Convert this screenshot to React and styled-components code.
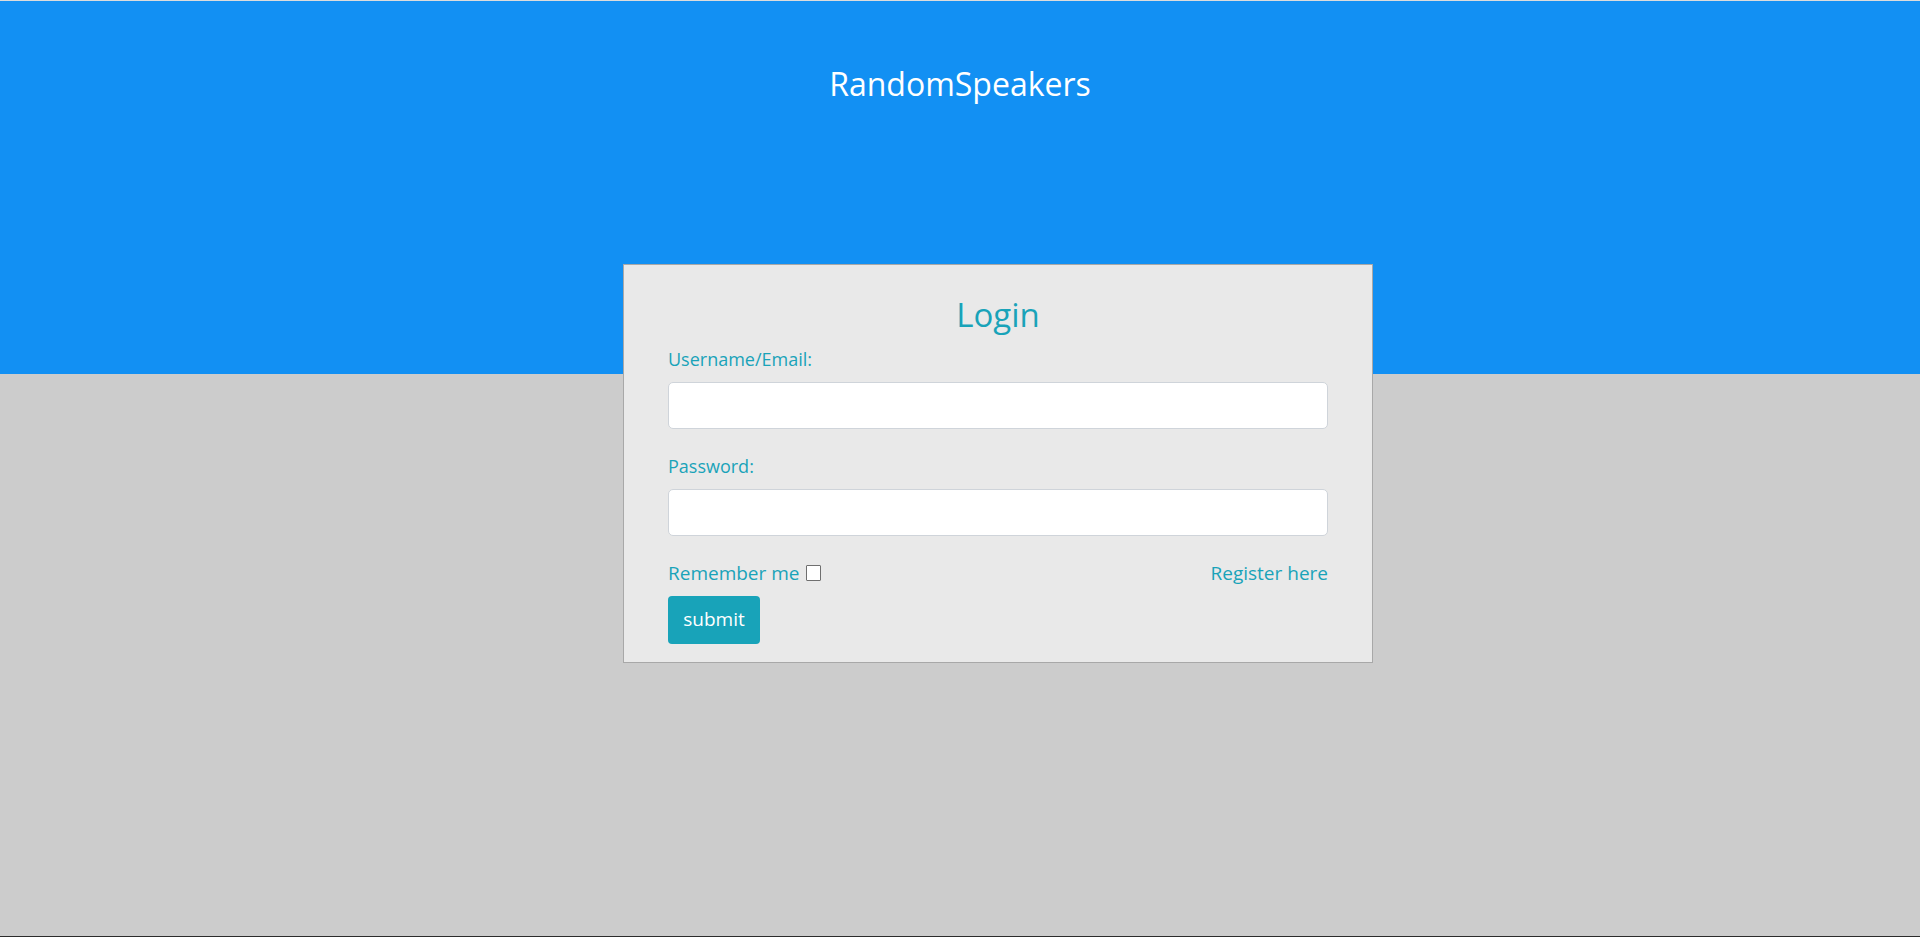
import React from "react";
import styled, { createGlobalStyle } from "styled-components";

const GlobalStyle = createGlobalStyle`
  html, body {
    margin: 0;
    padding: 0;
  }
  body {
    font-family: "Open Sans", "Noto Sans", "Liberation Sans", sans-serif;
    background: #cccccc;
  }
  * { box-sizing: border-box; }
`;

const Page = styled.div`
  min-height: 937px;
  display: flex;
  flex-direction: column;
  background: #cccccc;
  border-top: 1px solid #dcdcdc;
  border-bottom: 1px solid #2b2b2b;
`;

const Header = styled.header`
  height: 373px;
  flex: none;
  background: #1290f3;
  padding-top: 61px;
  text-align: center;
`;

const Brand = styled.div`
  color: #ffffff;
  font-size: 32px;
  line-height: normal;
`;

const Main = styled.main`
  flex: 1;
  display: flex;
  justify-content: flex-start;
  padding-left: 623px;
`;

const Card = styled.form`
  width: 750px;
  margin-top: -110px;
  align-self: flex-start;
  background: #e9e9e9;
  border: 1px solid #a8a8a8;
  padding: 0 44px 18px 44px;
  display: flex;
  flex-direction: column;
`;

const Title = styled.h2`
  margin: 27px 0 0;
  font-weight: 400;
  font-size: 33px;
  line-height: normal;
  color: #19a3b9;
  text-align: center;
`;

const Field = styled.div`
  display: flex;
  flex-direction: column;
  margin-top: ${(p) => p.$gap}px;
`;

const Label = styled.label`
  font-size: 18px;
  line-height: normal;
  color: #19a3b9;
  margin-bottom: 11px;
`;

const Input = styled.input`
  height: 47px;
  width: 100%;
  background: #ffffff;
  border: 1px solid #cfd4da;
  border-radius: 5px;
  padding: 6px 12px;
  font-size: 18px;
  font-family: inherit;
  outline: none;
`;

const OptionsRow = styled.div`
  display: flex;
  justify-content: space-between;
  align-items: baseline;
  margin-top: 24px;
  font-size: 19px;
  line-height: normal;
  color: #19a3b9;
`;

const Remember = styled.label`
  display: inline-flex;
  align-items: baseline;
`;

const Check = styled.input`
  appearance: none;
  -webkit-appearance: none;
  width: 15px;
  height: 16px;
  margin: 0 0 0 6px;
  border: 1px solid #6f6f6f;
  background: #ffffff;
  border-radius: 1px;
  align-self: flex-end;
  position: relative;
  top: -5px;
`;

const RegisterLink = styled.a`
  color: #19a3b9;
  text-decoration: none;
`;

const SubmitButton = styled.button`
  align-self: flex-start;
  margin-top: 10px;
  width: 92px;
  height: 48px;
  background: #18a3b9;
  color: #ffffff;
  border: none;
  border-radius: 4px;
  font-family: inherit;
  font-size: 19px;
  padding: 0 0 2px;
  cursor: pointer;
`;

export default function App() {
  return (
    <>
      <GlobalStyle />
      <Page>
        <Header>
          <Brand>RandomSpeakers</Brand>
        </Header>
        <Main>
          <Card onSubmit={(e) => e.preventDefault()}>
            <Title>Login</Title>
            <Field $gap={10}>
              <Label htmlFor="user">Username/Email:</Label>
              <Input id="user" type="text" />
            </Field>
            <Field $gap={25}>
              <Label htmlFor="pass">Password:</Label>
              <Input id="pass" type="password" />
            </Field>
            <OptionsRow>
              <Remember>
                Remember me
                <Check type="checkbox" />
              </Remember>
              <RegisterLink href="#">Register here</RegisterLink>
            </OptionsRow>
            <SubmitButton type="submit">submit</SubmitButton>
          </Card>
        </Main>
      </Page>
    </>
  );
}
